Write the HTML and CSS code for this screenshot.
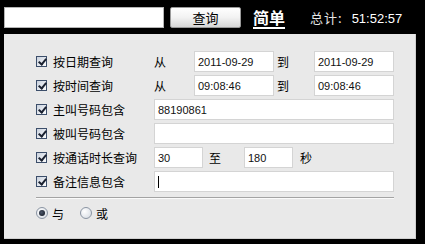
FILE: index.html
```html
<!DOCTYPE html>
<html lang="zh-CN">
    <head>
        <meta charset="UTF-8" />
        <title>通话记录查询</title>
        <link rel="stylesheet" href="styles.css">
    </head>

    <body>
        <!-- 顶部栏 -->
        <div class="topbar">
            <input type="text" class="search" />
            <button class="btn">查询</button>
            <a class="simple" href="#">简单</a>
            <span class="total">总计:<b>51:52:57</b></span>
        </div>

        <!-- 条件区域 -->
        <div class="panel">
            <div class="row">
                <label class="opt"><span class="chk"></span>按日期查询</label>
                <span class="word w-from">从</span>
                <span class="field f-mid">2011-09-29</span>
                <span class="word w-to">到</span>
                <span class="field f-mid">2011-09-29</span>
            </div>
            <div class="row">
                <label class="opt"><span class="chk"></span>按时间查询</label>
                <span class="word w-from">从</span>
                <span class="field f-mid">09:08:46</span>
                <span class="word w-to">到</span>
                <span class="field f-mid">09:08:46</span>
            </div>
            <div class="row">
                <label class="opt"><span class="chk"></span>主叫号码包含</label>
                <span class="field f-wide">88190861</span>
            </div>
            <div class="row">
                <label class="opt"><span class="chk"></span>被叫号码包含</label>
                <span class="field f-wide"></span>
            </div>
            <div class="row">
                <label class="opt"><span class="chk"></span>按通话时长查询</label>
                <span class="field f-small">30</span>
                <span class="word w-till">至</span>
                <span class="field f-small">180</span>
                <span class="word w-sec">秒</span>
            </div>
            <div class="row">
                <label class="opt"><span class="chk"></span>备注信息包含</label>
                <span class="field f-wide"><span class="caret"></span></span>
            </div>

            <hr />

            <div class="radios">
                <label class="radio"><span class="dot on"></span>与</label>
                <label class="radio"><span class="dot"></span>或</label>
            </div>
        </div>
    </body>
</html>
```

FILE: styles.css
```css
* {
    margin: 0;
    padding: 0;
    box-sizing: border-box;
}

body {
    width: 425px;
    height: 244px;
    background: #000;
    font-family: "Liberation Sans", "Noto Sans CJK SC", sans-serif;
    font-size: 12px;
    color: #000;
    overflow: hidden;
}

.topbar {
    display: flex;
    align-items: center;
    height: 21px;
    margin: 7px 0 0 4px;
}

.search {
    width: 160px;
    height: 21px;
    border: 1px solid #b5b5b5;
    background: #fff;
}

.btn {
    width: 71px;
    height: 21px;
    margin-left: 6px;
    border: 1px solid #9a9a9a;
    border-radius: 2px;
    background: linear-gradient(#ffffff, #f2f2f2 50%, #d6d6d6);
    font-family: "Noto Sans CJK SC", sans-serif;
    font-size: 13px;
    line-height: 19px;
    color: #000;
}

.simple {
    margin-left: 12px;
    color: #fff;
    font-family: "Noto Sans CJK SC", sans-serif;
    font-size: 16px;
    font-weight: bold;
    line-height: 19px;
    text-decoration: underline;
    text-decoration-thickness: 2px;
    text-underline-offset: 3px;
}

.total {
    margin-left: 25px;
    color: #e6e6e6;
    font-family: "Noto Sans CJK SC", sans-serif;
    font-size: 13px;
    letter-spacing: 1px;
}
.total b {
    margin-left: 9px;
    font-family: "Liberation Sans", sans-serif;
    font-size: 13px;
    font-weight: normal;
    letter-spacing: 0;
    color: #fff;
}

.panel {
    width: 412px;
    height: 205px;
    margin: 6px 0 0 4px;
    padding: 17px 0 0 32px;
    background: #e9e9e9;
    border-right: 1px solid #d0d0d0;
    border-bottom: 1px solid #d0d0d0;
}

.row {
    display: flex;
    align-items: center;
    height: 21px;
    margin-bottom: 3px;
}

.opt {
    display: flex;
    align-items: center;
    width: 118px;
    font-family: "Noto Sans CJK SC", sans-serif;
    font-size: 12px;
}

.chk {
    position: relative;
    width: 11px;
    height: 11px;
    margin-right: 6px;
    border: 1px solid #3c4e6a;
    background: linear-gradient(135deg, #c9d1dd, #fbfcfd);
}
.chk::after {
    content: "";
    position: absolute;
    left: 3px;
    top: 0;
    width: 3px;
    height: 6px;
    border-right: 2px solid #1a2130;
    border-bottom: 2px solid #1a2130;
    transform: rotate(40deg);
}

.word {
    font-family: "Noto Sans CJK SC", sans-serif;
    font-size: 12px;
}
.w-from {
    width: 40px;
}
.w-to {
    width: 40px;
    padding-left: 3px;
}
.w-till {
    width: 41px;
    padding-left: 6px;
}
.w-sec {
    padding-left: 7px;
}

.field {
    display: flex;
    align-items: center;
    height: 21px;
    padding-left: 3px;
    border: 1px solid #d4d4d4;
    background: #fff;
    font-size: 11px;
    color: #111;
}
.f-mid {
    width: 80px;
}
.f-wide {
    width: 240px;
}
.f-small {
    width: 49px;
}

.caret {
    width: 1px;
    height: 12px;
    background: #000;
}

hr {
    width: 358px;
    height: 0;
    margin-top: 5px;
    border: none;
    border-top: 1px solid #a3a3a3;
    border-bottom: 1px solid #fafafa;
}

.radios {
    display: flex;
    align-items: center;
    height: 26px;
    margin-top: 1px;
}

.radio {
    display: flex;
    align-items: center;
    margin-right: 16px;
    font-family: "Noto Sans CJK SC", sans-serif;
    font-size: 12px;
}

.dot {
    position: relative;
    width: 12px;
    height: 12px;
    margin-right: 4px;
    border: 1px solid #8b95a3;
    border-radius: 50%;
    background: radial-gradient(circle at 35% 35%, #ffffff, #d2d8e0);
}
.dot.on::after {
    content: "";
    position: absolute;
    left: 2px;
    top: 2px;
    width: 6px;
    height: 6px;
    border-radius: 50%;
    background: radial-gradient(circle at 40% 40%, #4a5568, #10151f);
}
```
